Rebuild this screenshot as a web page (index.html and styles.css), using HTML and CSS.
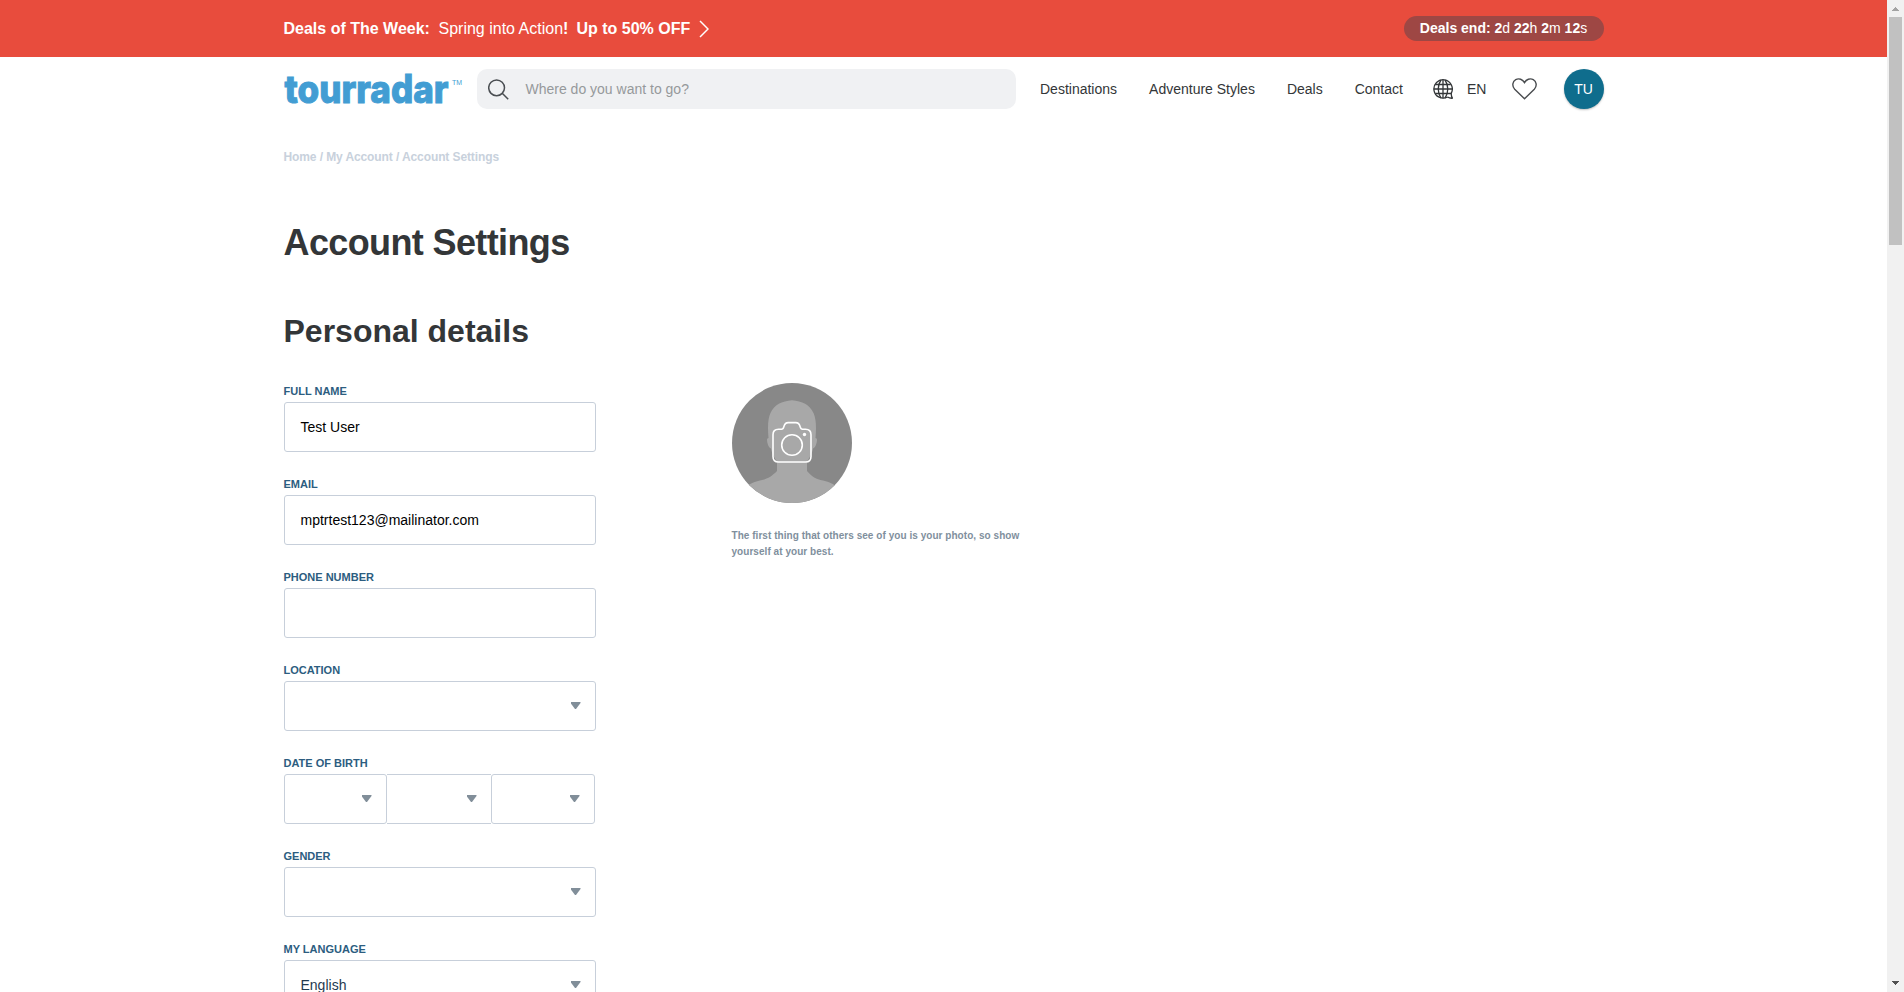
FILE: index.html
```html
<!DOCTYPE html>
<html lang="en">
<head>
<meta charset="utf-8">
<title>Account Settings</title>
<link rel="stylesheet" href="styles.css">
</head>
<body>
<div class="window">
  <div class="page">
    <div class="banner">
      <div class="container banner-row">
        <a class="banner-link"><b class="banner-lead">Deals of The Week:</b><span class="banner-text">Spring into Action<b>!</b></span><b class="banner-offer">Up to 50% OFF</b>
          <svg class="chevron" width="10" height="18" viewBox="0 0 10 18"><path d="M1 1l8 8-8 8" fill="none" stroke="#fff" stroke-width="1.5"/></svg>
        </a>
        <div class="countdown"><b>Deals end: 2</b>d <b>22</b>h <b>2</b>m <b>12</b>s</div>
      </div>
    </div>
    <header class="container header">
      <div class="logo">
        <svg width="167" height="56" viewBox="0 0 167 56">
          <text class="logo-word" x="0.5" y="42.3" textLength="164" lengthAdjust="spacingAndGlyphs">tourradar</text>
        </svg>
        <svg class="logo-mark" width="12" height="12" viewBox="0 0 12 12">
          <text class="logo-tm" x="1" y="9" textLength="10" lengthAdjust="spacingAndGlyphs">TM</text>
        </svg>
      </div>
      <div class="search">
        <svg width="21" height="21" viewBox="0 0 21 21" fill="none" stroke="#4a4e52" stroke-width="1.5"><circle cx="8.6" cy="8.8" r="7.9"/><path d="M14.2 14.3l6 6"/></svg>
        <span>Where do you want to go?</span>
      </div>
      <nav class="nav">
        <a>Destinations</a><a>Adventure Styles</a><a>Deals</a><a>Contact</a>
      </nav>
      <div class="language">
        <svg width="20" height="20" viewBox="0 0 20 20" fill="none" stroke="#333638" stroke-width="1.3"><path d="M14.5 18A9.200 9.200 0 1 1 18.300 14.100q-.2 3.200 1.200 5.100-2.600.3-5-1.200"/><path d="M10 .8v18.400M.8 10h18.400M2.200 5.500h15.600M2.200 14.500h16M8 1C4.300 6 4.300 14 8 19M12 1c3.700 5 3.700 13 0 18"/></svg>
        <span>EN</span>
      </div>
      <svg class="heart" width="25" height="22" viewBox="0 0 25 22"><path d="M12.500 20.700L2.700 11.200C-.3 8 .5 3.300 3.700 1.600 7 0 10.700 1.300 12.500 4.600 14.300 1.300 18 0 21.300 1.600c3.200 1.700 4 6.400 1 9.600z" fill="none" stroke="#4a4d50" stroke-width="1.4"/></svg>
      <div class="avatar">TU</div>
    </header>
    <main class="container">
      <div class="crumbs">Home / My Account / Account Settings</div>
      <h1>Account Settings</h1>
      <h2>Personal details</h2>
      <div class="details">
        <form class="form">
          <div class="field"><label>Full name</label><div class="control">Test User</div></div>
          <div class="field"><label>Email</label><div class="control">mptrtest123@mailinator.com</div></div>
          <div class="field"><label>Phone number</label><div class="control"></div></div>
          <div class="field"><label>Location</label><div class="control select"></div></div>
          <div class="field"><label>Date of birth</label>
            <div class="dob"><div class="control select day"></div><div class="control select month"></div><div class="control select year"></div></div>
          </div>
          <div class="field"><label>Gender</label><div class="control select"></div></div>
          <div class="field"><label>My language</label><div class="control select language-value">English</div></div>
        </form>
        <section class="photo">
          <svg width="120" height="120" viewBox="0 0 120 120">
            <defs><clipPath id="round"><circle cx="60" cy="60" r="60"/></clipPath></defs>
            <g clip-path="url(#round)">
              <path d="M0 0h120v120H0z" fill="#888"/>
              <path d="M45 79C41 72 39.500 69 39 65.500 36.500 64.500 35 60 35 56.500q0-1.500 1.500-1.500C35.500 43 36 35.500 38.500 30 42 22 50 18 60 17.300 70 18 78 22 81.500 30 84 35.500 84.500 43 83.500 55q1.500 0 1.500 1.500C85 60 83.500 64.500 81 65.500 80.500 69 79 72 75 79v9c5 6 9 8 16 9.500 8 2 12 4 18 10L110 120H10V107.500c6-6 10-8 18-10C36 96 40 93 45 88z" fill="#a8a8a8"/>
            </g>
            <g fill="none" stroke="#fff" stroke-width="1.6"><path d="M46.500 46.300h3c1.800 0 2-1.200 2.500-3 .7-2.600 1.700-3.700 4.200-3.700h7.600c2.500 0 3.500 1.100 4.200 3.700.5 1.800.7 3 2.500 3h3c3.500 0 5.500 2 5.500 5.500v21.700c0 3.500-2 5.500-5.500 5.500h-27c-3.500 0-5.500-2-5.500-5.500V51.800c0-3.500 2-5.500 5.500-5.500z"/><circle cx="60" cy="62" r="10.300"/></g>
            <circle cx="72.500" cy="51.500" r="1.700" fill="#fff"/>
          </svg>
          <p>The first thing that others see of you is your photo, so show<br>yourself at your best.</p>
        </section>
      </div>
    </main>
  </div>
  <div class="scrollbar">
    <svg width="17" height="17" viewBox="0 0 17 17" shape-rendering="crispEdges"><path d="M8 7h1v1h1v1h1v1h1v1H5v-1h1V9h1V8h1z" fill="#a3a3a3"/></svg>
    <div class="thumb"></div>
    <svg class="down" width="17" height="17" viewBox="0 0 17 17" shape-rendering="crispEdges"><path d="M5 6h7v1h-1v1h-1v1H9v1H8V9H7V8H6V7H5z" fill="#505050"/></svg>
  </div>
</div>
</body>
</html>
```
FILE: styles.css
```css
* { box-sizing: border-box; }
body { margin: 0; font-family: "Liberation Sans", Arial, sans-serif; font-size: 14px; color: #333638; background: #fff; }
.window { display: flex; height: 992px; overflow: hidden; }
.page { flex: 1; }
.container { width: 1320px; margin: 0 auto; }
svg { display: block; flex: none; }

.banner { height: 57px; background: #e84c3d; color: #fff; }
.banner-row { display: flex; align-items: center; justify-content: space-between; height: 57px; }
.banner-link { display: flex; align-items: center; font-size: 16px; white-space: nowrap; }
.banner-lead { width: 155px; }
.banner-text { width: 138px; }
.banner-offer { width: 123px; }
.chevron { margin-left: -.5px; }
.countdown { width: 200px; height: 25px; border-radius: 13px; background: #9e4744; text-align: center; line-height: 24px; white-space: nowrap; }

.header { display: flex; align-items: center; height: 64px; }
.logo { display: flex; align-items: flex-start; width: 193px; }
.logo svg { overflow: visible; }
.logo-mark { margin-top: 15px; }
.logo-word { font: 800 39px Inter, sans-serif; fill: #429dd3; stroke: #429dd3; stroke-width: 1px; }
.logo-tm { font: 400 7px "Liberation Sans", sans-serif; fill: #429dd3; }
.search { display: flex; align-items: center; gap: 17px; width: 539px; height: 40px; padding-left: 11px; border-radius: 10px; background: #f0f1f3; color: #96999b; }
.nav { display: flex; gap: 32px; margin-left: 24.5px; white-space: nowrap; }
.language { display: flex; align-items: center; gap: 14px; margin-left: 30px; }
.heart { margin-left: 26px; }
.avatar { width: 40px; height: 40px; margin-left: auto; border-radius: 50%; background: #0f6d8d; color: #fff; text-align: center; line-height: 40px; box-shadow: 0 1px 2px rgba(0, 0, 0, .25); }

.crumbs { margin-top: 28px; font-size: 12px; font-weight: 700; line-height: 16px; letter-spacing: -.1px; color: #c8d1dc; }
h1 { margin: 57px 0 0; font-size: 36px; line-height: 42px; letter-spacing: -.62px; }
h2 { margin: 47px 0 0; font-size: 32px; line-height: 40px; }
.details { display: flex; margin-top: 32px; }
.form { width: 312px; }
.field { height: 93px; }
.field label { display: block; height: 19px; font-size: 11px; font-weight: 700; line-height: 16px; color: #2c5d80; text-transform: uppercase; }
.control { position: relative; height: 50px; padding-left: 16px; border: 1px solid #c7cfda; border-radius: 3px; background: #fff; color: #000; line-height: 48px; }
.select::after { content: ""; position: absolute; right: 14px; top: 20px; width: 10px; height: 7px; background: #818e99; clip-path: polygon(0 0, 100% 0, 100% 15%, 55% 100%, 45% 100%, 0 15%); }
.language-value { color: #1f3a50; }
.dob { display: flex; }
.day { width: 103px; }
.month { width: 104px; border-left: 0; border-right: 0; border-radius: 0; }
.year { width: 104px; }
.photo { margin: 0 0 0 136px; }
.photo p { margin: 25px 0 0; font-size: 10px; font-weight: 700; line-height: 16px; letter-spacing: .045px; color: #7f8f9d; white-space: nowrap; }

.scrollbar { display: flex; flex-direction: column; width: 17px; background: #f1f1f1; }
.thumb { width: 13px; height: 228px; margin-left: 2px; background: #c1c1c1; }
.down { margin-top: auto; }
```
